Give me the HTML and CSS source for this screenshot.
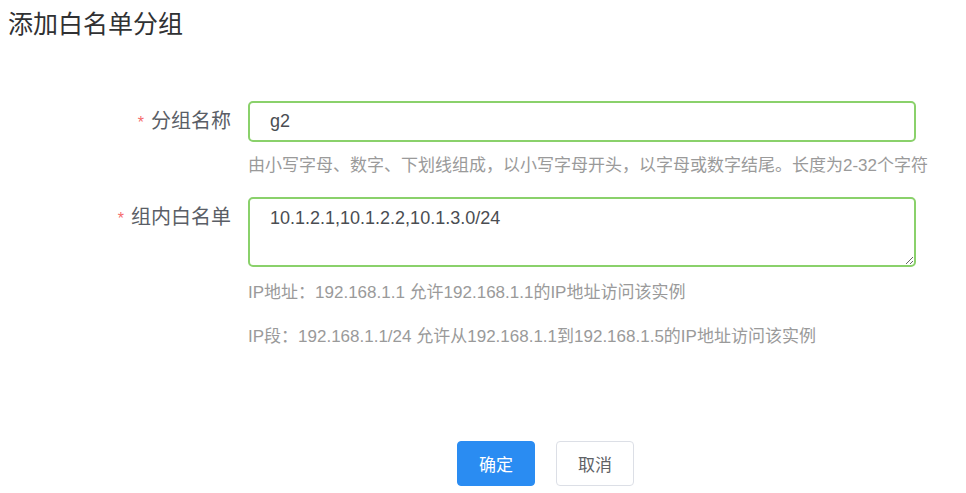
FILE: index.html
```html
<!DOCTYPE html>
<html>
<head>
  <meta charset="utf-8">
  <title>添加白名单分组</title>
  <link rel="stylesheet" href="styles.css">
</head>
<body>
  <div class="page">
    <h1 class="title">添加白名单分组</h1>

    <form class="form">
      <div class="form-item">
        <label class="form-label" for="groupName"><span class="star">*</span>分组名称</label>
        <div class="form-control">
          <input type="text" id="groupName" class="input" value="g2">
          <div class="hint hint-first">由小写字母、数字、下划线组成，以小写字母开头，以字母或数字结尾。长度为2-32个字符</div>
        </div>
      </div>

      <div class="form-item">
        <label class="form-label" for="ipList"><span class="star">*</span>组内白名单</label>
        <div class="form-control">
          <textarea id="ipList" class="textarea">10.1.2.1,10.1.2.2,10.1.3.0/24</textarea>
          <div class="hint hint-first">IP地址：192.168.1.1 允许192.168.1.1的IP地址访问该实例</div>
          <div class="hint hint-next">IP段：192.168.1.1/24 允许从192.168.1.1到192.168.1.5的IP地址访问该实例</div>
        </div>
      </div>

      <div class="footer">
        <button type="button" class="btn btn-primary">确定</button>
        <button type="button" class="btn">取消</button>
      </div>
    </form>
  </div>
</body>
</html>
```

FILE: styles.css
```css
* { box-sizing: border-box; }
body {
  margin: 0;
  padding: 0;
  background: #fff;
  font-family: "Liberation Sans", "Noto Sans CJK SC", sans-serif;
  color: #606266;
}
.page {
  padding: 0 8px;
}
.title {
  margin: 0;
  padding-top: 9px;
  font-size: 25px;
  line-height: 30px;
  font-weight: normal;
  color: #303133;
}
.form {
  margin-top: 62px;
}
.form-item {
  display: flex;
  margin-bottom: 19px;
}
.form-label {
  width: 240px;
  padding-right: 17px;
  text-align: right;
  font-size: 20px;
  line-height: 41px;
  color: #5a5e66;
}
.star {
  color: #f56c6c;
  font-size: 16px;
  margin-right: 7px;
}
.form-control {
  width: 668px;
}
.input, .textarea {
  display: block;
  width: 100%;
  border: 2px solid #8ad16b;
  border-radius: 5px;
  font-family: "Liberation Sans", "Noto Sans CJK SC", sans-serif;
  font-size: 18px;
  color: #4a4d52;
  outline: none;
  background: #fff;
}
.input {
  height: 41px;
  padding: 0 20px;
}
.textarea {
  height: 70px;
  padding: 7px 20px;
  line-height: 24px;
  resize: vertical;
}
.hint {
  font-size: 17px;
  line-height: 24px;
  color: #9a9a9a;
  white-space: nowrap;
}
.hint-first {
  margin-top: 12px;
}
.textarea + .hint-first {
  margin-top: 14px;
}
.hint-next {
  margin-top: 20px;
}
.footer {
  display: flex;
  gap: 21px;
  padding-left: 449px;
  margin-top: 92px;
}
.btn {
  width: 78px;
  height: 45px;
  border: 1px solid #dcdfe6;
  border-radius: 4px;
  background: #fff;
  color: #606266;
  font-family: "Liberation Sans", "Noto Sans CJK SC", sans-serif;
  font-size: 17px;
  cursor: pointer;
}
.btn-primary {
  background: #2a8cf2;
  border-color: #2a8cf2;
  color: #fff;
}
```
